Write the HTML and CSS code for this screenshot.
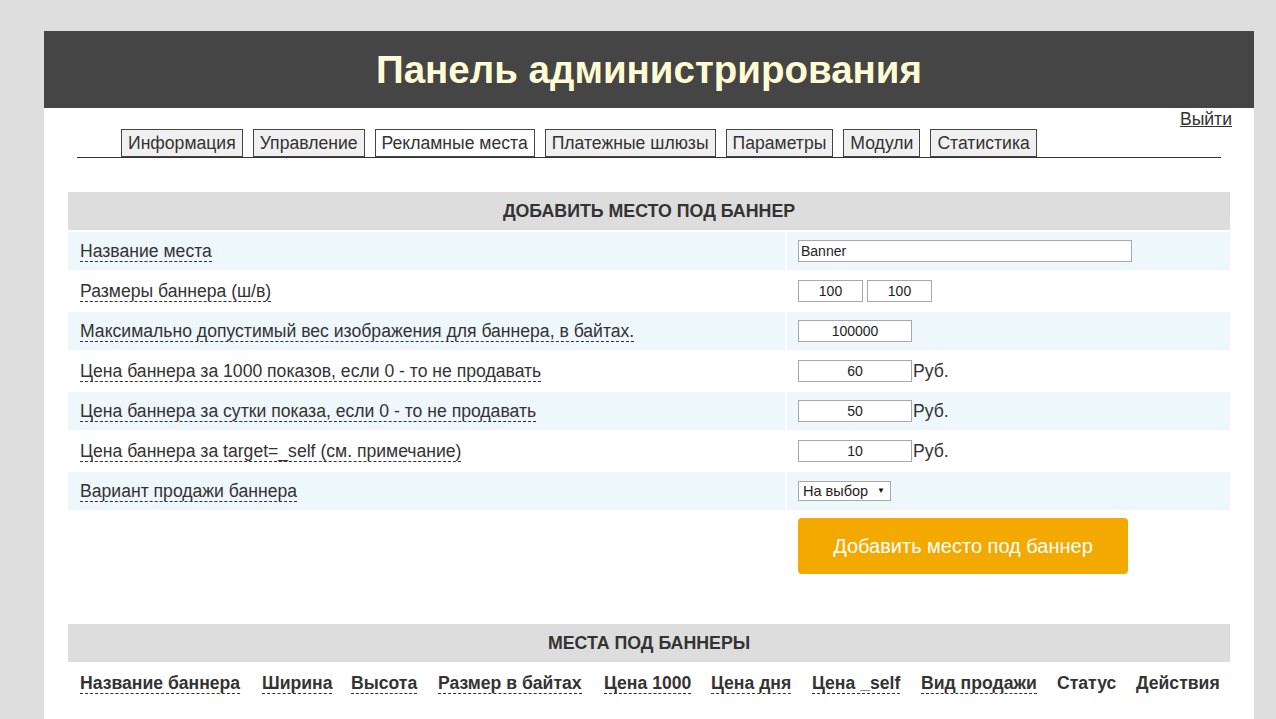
FILE: index.html
```html
<!DOCTYPE html>
<html lang="ru">
<head>
<meta charset="utf-8">
<title>Панель администрирования</title>
<link rel="stylesheet" href="styles.css">
</head>
<body>
<div class="page">
  <header class="top">
    <h1 class="title">Панель администрирования</h1>
  </header>
  <div class="logout-row"><a class="logout" href="#">Выйти</a></div>
  <nav class="tabs">
    <a class="tab" href="#">Информация</a>
    <a class="tab" href="#">Управление</a>
    <a class="tab active" href="#">Рекламные места</a>
    <a class="tab" href="#">Платежные шлюзы</a>
    <a class="tab" href="#">Параметры</a>
    <a class="tab" href="#">Модули</a>
    <a class="tab" href="#">Статистика</a>
  </nav>

  <table class="form-table">
    <colgroup><col class="fc1"><col class="fc2"></colgroup>
    <tr><th colspan="2" class="caption">ДОБАВИТЬ МЕСТО ПОД БАННЕР</th></tr>
    <tr class="odd">
      <td class="lbl"><span class="dash">Название места</span></td>
      <td class="val"><input class="inp inp-name" type="text" value="Banner"></td>
    </tr>
    <tr>
      <td class="lbl"><span class="dash">Размеры баннера (ш/в)</span></td>
      <td class="val"><div class="pair"><input class="inp inp-size" type="text" value="100"><input class="inp inp-size" type="text" value="100"></div></td>
    </tr>
    <tr class="odd">
      <td class="lbl"><span class="dash">Максимально допустимый вес изображения для баннера, в байтах.</span></td>
      <td class="val"><input class="inp inp-num" type="text" value="100000"></td>
    </tr>
    <tr>
      <td class="lbl"><span class="dash">Цена баннера за 1000 показов, если 0 - то не продавать</span></td>
      <td class="val"><input class="inp inp-num" type="text" value="60"><span class="cur">Руб.</span></td>
    </tr>
    <tr class="odd">
      <td class="lbl"><span class="dash">Цена баннера за сутки показа, если 0 - то не продавать</span></td>
      <td class="val"><input class="inp inp-num" type="text" value="50"><span class="cur">Руб.</span></td>
    </tr>
    <tr>
      <td class="lbl"><span class="dash">Цена баннера за target=_self (см. примечание)</span></td>
      <td class="val"><input class="inp inp-num" type="text" value="10"><span class="cur">Руб.</span></td>
    </tr>
    <tr class="odd">
      <td class="lbl"><span class="dash">Вариант продажи баннера</span></td>
      <td class="val"><span class="sel-wrap"><select class="sel"><option>На выбор</option></select></span></td>
    </tr>
    <tr class="btn-row">
      <td></td>
      <td class="val"><button class="btn" type="button">Добавить место под баннер</button></td>
    </tr>
  </table>

  <table class="list-table">
    <colgroup>
      <col class="c1"><col class="c2"><col class="c3"><col class="c4"><col class="c5">
      <col class="c6"><col class="c7"><col class="c8"><col class="c9"><col class="c10">
    </colgroup>
    <tr><th colspan="10" class="caption">МЕСТА ПОД БАННЕРЫ</th></tr>
    <tr class="heads">
      <th><span class="dash">Название баннера</span></th>
      <th><span class="dash">Ширина</span></th>
      <th><span class="dash">Высота</span></th>
      <th><span class="dash">Размер в байтах</span></th>
      <th><span class="dash">Цена 1000</span></th>
      <th><span class="dash">Цена дня</span></th>
      <th><span class="dash">Цена _self</span></th>
      <th><span class="dash">Вид продажи</span></th>
      <th>Статус</th>
      <th>Действия</th>
    </tr>
  </table>
</div>
</body>
</html>
```

FILE: styles.css
```css
html, body {
  margin: 0;
  padding: 0;
}
body {
  background: #dedede;
  font-family: Arial, "Liberation Sans", sans-serif;
  color: #333;
}
.page {
  width: 1210px;
  margin: 31px 0 0 44px;
  background: #fff;
  min-height: 700px;
}
.top {
  background: #454545;
  height: 77px;
}
.title {
  margin: 0;
  text-align: center;
  font-size: 38.5px;
  line-height: 77px;
  font-weight: bold;
  color: #fffbd4;
}
.logout-row {
  display: flex;
  justify-content: flex-end;
  padding: 1px 22px 0 0;
  height: 20px;
}
.logout {
  font-size: 17.6px;
  line-height: 20px;
  color: #333;
  text-decoration: underline;
}
.tabs {
  display: flex;
  gap: 10px;
  margin: 0 33px;
  padding: 0 0 0 44px;
  border-bottom: 1px solid #333;
}
.tab {
  display: block;
  height: 26px;
  line-height: 26px;
  padding: 0 6px;
  border: 1px solid #444;
  background: #f1f0f0;
  color: #333;
  font-size: 17.6px;
  text-decoration: none;
}
.tab.active {
  background: #fff;
}

.form-table,
.list-table {
  border-spacing: 2px;
  margin: 32px 22px 0 22px;
  width: 1166px;
  table-layout: fixed;
}
.form-table .fc1 { width: 717px; }
.form-table .fc2 { width: 443px; }
.caption {
  background: #dddddd;
  height: 38px;
  padding: 0;
  font-size: 17.8px;
  font-weight: bold;
  text-align: center;
  color: #333;
}
.form-table td {
  height: 38px;
  padding: 0;
  vertical-align: middle;
}
.form-table td.lbl {
  padding: 0 0 0 12px;
  font-size: 17.6px;
}
.form-table td.val {
  padding: 0 0 0 11px;
}
.form-table tr.odd td {
  background: #eef7fc;
}
.dash {
  border-bottom: 1px dashed #333;
  padding-bottom: 0;
}
.inp {
  box-sizing: border-box;
  height: 22px;
  border: 1px solid #a9a9a9;
  font-family: Arial, "Liberation Sans", sans-serif;
  font-size: 14px;
  color: #222;
  padding: 0 2px;
  margin: 0;
  vertical-align: middle;
  background: #fff;
}
.inp-name {
  width: 334px;
}
.pair {
  display: flex;
  gap: 4px;
}
.inp-size {
  width: 65px;
  text-align: center;
}
.inp-num {
  width: 114px;
  text-align: center;
}
.cur {
  font-size: 17.6px;
  vertical-align: middle;
  margin-left: 1px;
}
.sel-wrap {
  position: relative;
  display: inline-block;
  vertical-align: middle;
}
.sel {
  appearance: none;
  -webkit-appearance: none;
  box-sizing: border-box;
  width: 93px;
  height: 20px;
  border: 1px solid #a9a9a9;
  border-radius: 0;
  background: #fff;
  font-family: Arial, "Liberation Sans", sans-serif;
  font-size: 14.5px;
  color: #222;
  padding: 0 0 0 4px;
  margin: 0;
  display: block;
}
.sel-wrap::after {
  content: "▼";
  position: absolute;
  right: 6px;
  top: 5px;
  font-size: 8px;
  color: #111;
  pointer-events: none;
}
.form-table tr.btn-row td {
  height: auto;
  padding-top: 6px;
  vertical-align: top;
}
.form-table tr.btn-row td.val {
  padding-left: 11px;
}
.btn {
  width: 330px;
  height: 56px;
  border: 0;
  border-radius: 4px;
  background: #f4a900;
  color: #fff;
  font-family: Arial, "Liberation Sans", sans-serif;
  font-size: 20px;
  cursor: pointer;
}

.list-table {
  margin-top: 46px;
}
.list-table .c1 { width: 180px; }
.list-table .c2 { width: 87px; }
.list-table .c3 { width: 85px; }
.list-table .c4 { width: 164px; }
.list-table .c5 { width: 105px; }
.list-table .c6 { width: 99px; }
.list-table .c7 { width: 107px; }
.list-table .c8 { width: 134px; }
.list-table .c9 { width: 77px; }
.list-table .c10 { width: 106px; }
.heads th {
  text-align: left;
  padding: 0 0 0 12px;
  height: 38px;
  font-size: 17.6px;
  font-weight: bold;
  color: #333;
  white-space: nowrap;
}
```
